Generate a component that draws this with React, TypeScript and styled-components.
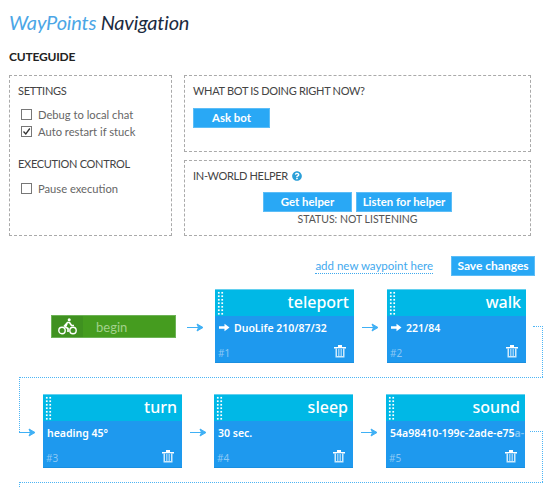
import styled, { createGlobalStyle } from 'styled-components'
import { FaQuestionCircle } from 'react-icons/fa'

const GlobalStyle = createGlobalStyle`
  html, body {
    margin: 0;
    padding: 0;
    background: #fff;
    overflow: hidden;
  }
  body {
    font-family: "Lato", "Noto Sans", sans-serif;
    color: #555;
  }
`

const Page = styled.div`
  position: relative;
  width: 550px;
  height: 487px;
  overflow: hidden;
`

const Title = styled.h1`
  margin: 0;
  padding: 9px 0 0 9px;
  height: 35px;
  font-size: 20px;
  line-height: 26px;
  letter-spacing: -0.2px;
  font-weight: 400;
  font-style: italic;
  color: #1c2b3f;
  span {
    color: #4ba6e6;
  }
`

const SubTitle = styled.h2`
  margin: 0;
  padding: 4px 0 0 9px;
  height: 27px;
  font-size: 12px;
  line-height: 18px;
  letter-spacing: -0.2px;
  font-weight: 700;
  color: #222;
`

const Panels = styled.div`
  display: grid;
  grid-template-columns: 163px 347px;
  column-gap: 12px;
  margin-left: 9px;
  height: 161px;
`

const Panel = styled.div`
  box-sizing: border-box;
  border: 1px dashed #aaa;
  padding: 7px 8px;
`

const Stack = styled.div`
  display: grid;
  grid-template-rows: 77px 76px;
  row-gap: 8px;
`

const SectionTitle = styled.h3<{ $top?: number }>`
  margin: ${(p) => p.$top ?? 0}px 0 0;
  font-size: 11px;
  line-height: 16px;
  letter-spacing: -0.3px;
  font-weight: 400;
  color: #444;
`

const CheckRow = styled.label`
  display: flex;
  align-items: center;
  gap: 6px;
  height: 17px;
  padding-left: 3px;
  font-size: 11.2px;
  color: #666;
`

const CheckList = styled.div<{ $top: number }>`
  margin-top: ${(p) => p.$top}px;
`

const Box = styled.span`
  box-sizing: border-box;
  display: flex;
  width: 11px;
  height: 11px;
  border: 1px solid #777;
  background: #fff;
  svg {
    display: block;
  }
`

const Button = styled.button<{ $w: number }>`
  box-sizing: border-box;
  width: ${(p) => p.$w}px;
  height: 20px;
  padding: 0;
  border: 1px solid #5cbdf7;
  background: #29a8f5;
  color: #fff;
  font-family: inherit;
  font-size: 11.4px;
  font-weight: 700;
  line-height: 18px;
  white-space: nowrap;
`

const SaveButton = styled(Button)`
  font-size: 12px;
`

const AskRow = styled.div`
  margin-top: 7px;
`

const HelperTitle = styled.div`
  display: flex;
  align-items: center;
  gap: 4px;
  svg {
    color: #2a9fd8;
    font-size: 10px;
  }
`

const HelperButtons = styled.div`
  display: flex;
  justify-content: center;
  gap: 4px;
  margin-top: 8px;
`

const Status = styled.div`
  text-align: center;
  font-size: 10.5px;
  line-height: 14px;
  color: #555;
`

const Actions = styled.div`
  display: flex;
  justify-content: flex-end;
  align-items: center;
  gap: 18px;
  height: 20px;
  margin: 20px 15px 0 0;
`

const AddLink = styled.a`
  font-size: 11.5px;
  line-height: 15px;
  color: #3fa9ee;
  border-bottom: 1px dotted #3fa9ee;
`

const Row = styled.div<{ $left: number; $top: number }>`
  display: flex;
  align-items: flex-start;
  margin: ${(p) => p.$top}px 0 0 ${(p) => p.$left}px;
  height: 74px;
`

const Begin = styled.div`
  box-sizing: border-box;
  display: flex;
  align-items: center;
  width: 125px;
  height: 23px;
  margin-top: 26px;
  border: 1px solid #6db356;
  background: #459c1f;
  color: #a2d18c;
  font-size: 13px;
`

const BeginIcon = styled.span`
  display: flex;
  align-items: center;
  justify-content: center;
  width: 31px;
  height: 100%;
  background: #3f9120;
`

const BeginLabel = styled.span`
  margin-left: 13px;
`

const Card = styled.div`
  box-sizing: border-box;
  display: flex;
  flex-direction: column;
  width: 139px;
  height: 74px;
  background: #1e99ee;
  border-bottom: 1px solid #1a8fe0;
`

const CardHead = styled.div`
  position: relative;
  box-sizing: border-box;
  height: 27px;
  padding-right: 5px;
  background: #00b8e6;
  border-top: 1px solid #63d0ef;
  color: #fff;
  font-family: "Noto Sans", sans-serif;
  font-size: 16px;
  line-height: 25px;
  font-weight: 500;
  text-align: right;
`

const Grip = styled.i`
  position: absolute;
  left: 2px;
  top: 1px;
  width: 7px;
  height: 24px;
  background-image: radial-gradient(#fff 1px, transparent 1.2px);
  background-size: 3.5px 3.5px;
`

const CardBody = styled.div`
  position: relative;
  flex: 1;
  padding: 5px 4px 0 4px;
  overflow: hidden;
  color: #fff;
  font-family: "Noto Sans", sans-serif;
  font-size: 10.5px;
  line-height: 14px;
  font-weight: 600;
  white-space: nowrap;
`

const Fade = styled.span`
  opacity: 0.45;
`

const Num = styled.span`
  position: absolute;
  left: 3px;
  bottom: 3px;
  font-size: 10px;
  line-height: 12px;
  font-weight: 400;
  color: #8cc8f5;
`

const TrashSlot = styled.span`
  position: absolute;
  right: 8px;
  bottom: 4px;
  display: flex;
`

const ArrowSlot = styled.span<{ $w: number; $start?: boolean }>`
  display: flex;
  justify-content: ${(p) => (p.$start ? 'flex-start' : 'center')};
  width: ${(p) => p.$w}px;
  padding-top: 34px;
`

const WrapOut = styled.div<{ $top: number; $left: number }>`
  position: absolute;
  top: ${(p) => p.$top}px;
  left: ${(p) => p.$left}px;
  width: ${(p) => 543 - p.$left}px;
  height: 51px;
  box-sizing: border-box;
  border: 1px dotted #4db5f5;
  border-left: 0;
  border-bottom: 0;
`

const WrapAcross = styled.div<{ $top: number }>`
  position: absolute;
  top: ${(p) => p.$top}px;
  left: 19px;
  width: 524px;
  border-top: 1px dotted #4db5f5;
`

const WrapIn = styled.div<{ $top: number; $h: number }>`
  position: absolute;
  top: ${(p) => p.$top}px;
  left: 19px;
  height: ${(p) => p.$h}px;
  border-left: 1px dotted #4db5f5;
`

const Arrow = () => (
  <svg width="17" height="9" viewBox="0 0 17 9" fill="none" stroke="#3fb0f5">
    <path d="M0 4.5H15" />
    <path d="M10 1 L16 4.5 L10 8 L11.5 4.5 Z" fill="#3fb0f5" />
  </svg>
)

const SmallArrow = () => (
  <svg width="11" height="9" viewBox="0 0 11 9" style={{ marginRight: 4 }} fill="#fff">
    <path d="M0 3.2H5.5V0.8L10.5 4.5L5.5 8.2V5.8H0Z" />
  </svg>
)

const Tick = () => (
  <svg width="9" height="9" viewBox="0 0 9 9" fill="none" stroke="#333" strokeWidth="1.3">
    <path d="M1.5 4.5L3.8 7L7.8 1.5" />
  </svg>
)

const Bike = () => (
  <svg width="19" height="17" viewBox="0 0 19 17" fill="none" stroke="#fff" strokeWidth="1.4">
    <circle cx="4" cy="12.5" r="3.2" />
    <circle cx="15" cy="12.5" r="3.2" />
    <circle cx="11.2" cy="1.8" r="1.5" fill="#fff" stroke="none" />
    <path d="M6 8.5L9.5 4.5H11.5L13.5 7.5H16M9 5.5L7.5 9L10 10.5V14" strokeWidth="1.7" />
  </svg>
)

const TrashIcon = () => (
  <svg width="12" height="13" viewBox="0 0 12 13">
    <path d="M0 2H12V3.5H0ZM4 0H8V2H4Z" fill="#fff" />
    <path d="M1.5 3.5H10.5V12.5H1.5Z" fill="#cfeafc" />
    <path d="M3 3.5V11H9V3.5" fill="#1e99ee" />
    <path d="M4.5 4V11M6 4V11M7.5 4V11" stroke="#cfeafc" strokeWidth="0.7" />
  </svg>
)

type Way = {
  kind: string
  text: string
  fade?: string
  go?: boolean
}

function WayCard({ way, n }: { way: Way; n: number }) {
  return (
    <Card>
      <CardHead>
        <Grip />
        {way.kind}
      </CardHead>
      <CardBody>
        {way.go && <SmallArrow />}
        {way.text}
        {way.fade && <Fade>{way.fade}</Fade>}
        <Num>#{n}</Num>
        <TrashSlot>
          <TrashIcon />
        </TrashSlot>
      </CardBody>
    </Card>
  )
}

export default function App() {
  return (
    <Page>
      <GlobalStyle />
      <Title>
        <span>WayPoints</span> Navigation
      </Title>
      <SubTitle>CUTEGUIDE</SubTitle>
      <Panels>
        <Panel>
          <SectionTitle>SETTINGS</SectionTitle>
          <CheckList $top={7}>
            <CheckRow>
              <Box />
              Debug to local chat
            </CheckRow>
            <CheckRow>
              <Box>
                <Tick />
              </Box>
              Auto restart if stuck
            </CheckRow>
          </CheckList>
          <SectionTitle $top={16}>EXECUTION CONTROL</SectionTitle>
          <CheckList $top={8}>
            <CheckRow>
              <Box />
              Pause execution
            </CheckRow>
          </CheckList>
        </Panel>
        <Stack>
          <Panel>
            <SectionTitle>WHAT BOT IS DOING RIGHT NOW?</SectionTitle>
            <AskRow>
              <Button $w={77}>Ask bot</Button>
            </AskRow>
          </Panel>
          <Panel>
            <HelperTitle>
              <SectionTitle>IN-WORLD HELPER</SectionTitle>
              <FaQuestionCircle />
            </HelperTitle>
            <HelperButtons>
              <Button $w={89}>Get helper</Button>
              <Button $w={96}>Listen for helper</Button>
            </HelperButtons>
            <Status>STATUS: NOT LISTENING</Status>
          </Panel>
        </Stack>
      </Panels>
      <Actions>
        <AddLink>add new waypoint here</AddLink>
        <SaveButton $w={84}>Save changes</SaveButton>
      </Actions>
      <Row $left={51} $top={13}>
        <Begin>
          <BeginIcon>
            <Bike />
          </BeginIcon>
          <BeginLabel>begin</BeginLabel>
        </Begin>
        <ArrowSlot $w={39}>
          <Arrow />
        </ArrowSlot>
        <WayCard n={1} way={{ kind: 'teleport', text: 'DuoLife 210/87/32', go: true }} />
        <ArrowSlot $w={33}>
          <Arrow />
        </ArrowSlot>
        <WayCard n={2} way={{ kind: 'walk', text: '221/84', go: true }} />
      </Row>
      <Row $left={19} $top={31}>
        <ArrowSlot $w={24} $start>
          <Arrow />
        </ArrowSlot>
        <WayCard n={3} way={{ kind: 'turn', text: 'heading 45°' }} />
        <ArrowSlot $w={32}>
          <Arrow />
        </ArrowSlot>
        <WayCard n={4} way={{ kind: 'sleep', text: '30 sec.' }} />
        <ArrowSlot $w={33}>
          <Arrow />
        </ArrowSlot>
        <WayCard n={5} way={{ kind: 'sound', text: '54a98410-199c-2ade-e75', fade: 'a-' }} />
      </Row>
      <WrapOut $top={326} $left={533} />
      <WrapAcross $top={377} />
      <WrapIn $top={377} $h={55} />
      <WrapOut $top={431} $left={530} />
      <WrapAcross $top={482} />
      <WrapIn $top={482} $h={5} />
    </Page>
  )
}
